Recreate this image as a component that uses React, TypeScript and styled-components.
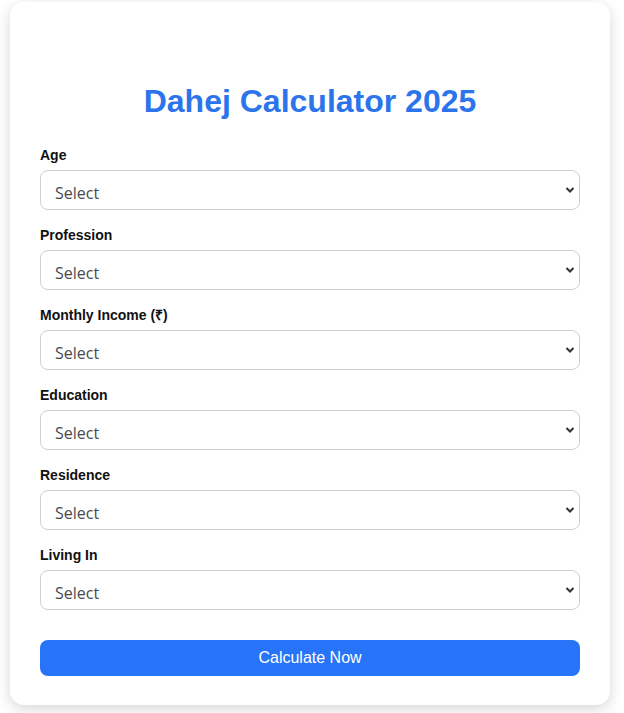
import React from 'react';
import styled, { createGlobalStyle } from 'styled-components';

const GlobalStyles = createGlobalStyle`
  * {
    box-sizing: border-box;
  }
  body {
    margin: 0;
    background: #ffffff;
    font-family: 'Liberation Sans', Arial, sans-serif;
  }
`;

export const Page = styled.div`
  padding: 2px 14px 8px 10px;
`;

export const Card = styled.div`
  width: 600px;
  background: #ffffff;
  border-radius: 14px;
  box-shadow: 0 4px 14px rgba(0, 0, 0, 0.16);
  padding: 30px 30px 29px;
`;

export const Title = styled.h1`
  margin: 51px 0 26px;
  text-align: center;
  color: #2b74ec;
  font-size: 32px;
  font-weight: 700;
  line-height: 37px;
`;

export const Field = styled.div`
  display: flex;
  flex-direction: column;
  margin-bottom: 16px;
`;

export const Label = styled.label`
  font-size: 14px;
  font-weight: 700;
  color: #111111;
  line-height: 16px;
  margin-top: 1px;
  margin-bottom: 7px;
`;

export const SelectWrap = styled.div`
  position: relative;
`;

export const Select = styled.select`
  appearance: none;
  width: 100%;
  height: 40px;
  padding: 5px 30px 0 14px;
  border: 1px solid #cfcfcf;
  border-radius: 8px;
  background: #ffffff;
  font-family: 'Open Sans', sans-serif;
  font-size: 16px;
  color: #4a4a4a;
  outline: none;
`;

export const Chevron = styled.svg`
  position: absolute;
  right: 5px;
  top: 16px;
  width: 10px;
  height: 8px;
  pointer-events: none;
`;

export const Button = styled.button`
  width: 100%;
  height: 36px;
  margin-top: 14px;
  border: none;
  border-radius: 8px;
  background: #2874f8;
  color: #ffffff;
  font-family: 'Liberation Sans', Arial, sans-serif;
  font-size: 16px;
  cursor: pointer;
`;

const fields = ['Age', 'Profession', 'Monthly Income (₹)', 'Education', 'Residence', 'Living In'];

const App = () => {
  return (
    <React.Fragment>
      <GlobalStyles />
      <Page>
        <Card>
          <Title>Dahej Calculator 2025</Title>
          {fields.map(name => (
            <Field key={name}>
              <Label>{name}</Label>
              <SelectWrap>
                <Select defaultValue=''>
                  <option value=''>Select</option>
                </Select>
                <Chevron viewBox='0 0 10 8'>
                  <path d='M1.5 2 L5 5.5 L8.5 2' fill='none' stroke='#333' strokeWidth='2' />
                </Chevron>
              </SelectWrap>
            </Field>
          ))}
          <Button>Calculate Now</Button>
        </Card>
      </Page>
    </React.Fragment>
  );
};

export default App;
